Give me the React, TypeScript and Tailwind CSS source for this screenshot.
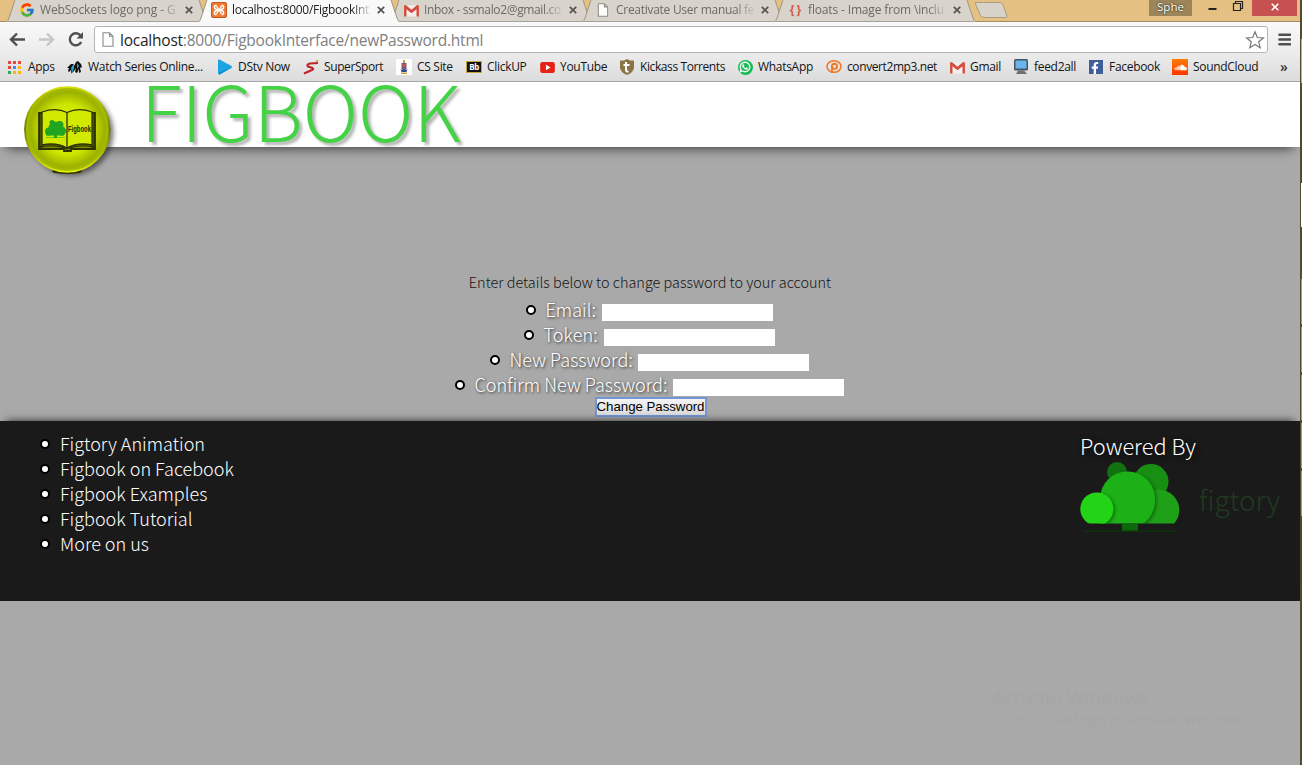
import React from "react";
import { FaWhatsapp, FaSoundcloud, FaFacebookF } from "react-icons/fa";
import { FcGoogle } from "react-icons/fc";

function PageIcon({ cls }: { cls: string }) {
  return (
    <svg viewBox="0 0 12 15" className={cls}>
      <path d="M1 .8h6.5L11 4.3v10H1z M7.5 .8v3.5H11" fill="#fdfdfb" stroke="#8b8b88" strokeWidth="1.1" />
    </svg>
  );
}

function GmailIcon() {
  return (
    <svg viewBox="0 0 16 14" className="h-[13px] w-[15px]">
      <path d="M1 1.5h14v12H1z" fill="#f2efee" />
      <path d="M0 2.2V13.5h2.6V5.6L8 10l5.4-4.4v7.9H16V2.2Q15.4.6 13.8 1.3L8 6.2 2.2 1.3Q.6.6 0 2.2z" fill="#d54b3d" />
    </svg>
  );
}

function XamppIcon() {
  return (
    <svg viewBox="0 0 16 16" className="size-4">
      <rect x=".5" y=".5" width="15" height="15" rx="1.5" fill="#ee7b35" stroke="#c9561a" />
      <g fill="none" stroke="#fff" strokeWidth="1.6">
        <path d="M5.600 3.500H4.500Q3.500 3.500 3.500 4.500V5.500Q3.500 6.500 4.500 7L11.500 9Q12.500 9.500 12.500 10.500V11.500Q12.500 12.500 11.500 12.500H10.400" />
        <path d="M10.400 3.500h1.100Q12.500 3.500 12.500 4.500V5.500Q12.500 6.500 11.500 7L4.500 9Q3.500 9.500 3.500 10.500V11.500Q3.500 12.500 4.500 12.500h1.100" />
        <path d="M5.500 4l5 8M10.500 4l-5 8" strokeWidth="1.200" />
      </g>
    </svg>
  );
}

type TabProps = { icon: React.ReactNode; title: string; active?: boolean; track: string };

function Tab({ icon, title, active, track }: TabProps) {
  return (
    <div className={"relative -mr-[10px] flex h-[22px] w-[202px] shrink-0 items-center pl-[14px] " + (active ? "z-10" : "")}>
      <svg viewBox="0 0 202 22" className="absolute inset-0 h-[22px] w-[202px]">
        <path d="M0 22Q2 21.500 3 18L8 3Q8.500 1 9 0H193Q193.500 1 194 3L199 18Q200 21.500 202 22z" fill={active ? "#f9f9f9" : "#d9d4cb"} />
        <path d="M0 22Q2 21.500 3 18L8 3Q8.500 1 9 0M193 0Q193.500 1 194 3L199 18Q200 21.500 202 22" fill="none" stroke="#a0957f" strokeWidth="1" />
        {!active && <path d="M2 21.500h198" stroke="#a5a09a" />}
      </svg>
      <div className="relative -mt-[2px] -ml-px flex w-4 justify-center">{icon}</div>
      <div className={"relative -mt-[3px] ml-[5px] w-[138px] overflow-hidden text-[12px] leading-4 whitespace-nowrap [mask-image:linear-gradient(to_right,#000_120px,transparent_140px)] " + track + " " + (active ? "text-[#222]" : "text-[#6d6a66]")}>{title}</div>
      <svg viewBox="0 0 8 8" className="relative -mt-[2px] ml-[7px] size-2">
        <path d="M.8 .8l6.400 6.400M7.200 .8L.8 7.200" stroke="#55534f" strokeWidth="1.700" />
      </svg>
    </div>
  );
}

function BrowserChrome() {
  return (
    <div className="relative h-[82px] w-[1300px] shrink-0 font-['Open_Sans',sans-serif] font-normal">
      <div className="flex h-[22px] bg-[#e4c182] pl-[6px] shadow-[inset_0_-1px_0_#a18c63]">
        <Tab icon={<FcGoogle size={16} />} title="WebSockets logo png - G" track="tracking-[-0.1px]" />
        <Tab icon={<XamppIcon />} title="localhost:8000/FigbookInt" active track="tracking-[-0.28px]" />
        <Tab icon={<GmailIcon />} title="Inbox - ssmalo2@gmail.co" track="tracking-[-0.35px]" />
        <Tab icon={<PageIcon cls="h-[14px] w-[12px]" />} title="Creativate User manual fe" track="tracking-[-0.28px]" />
        <Tab icon={<span className="-mt-px ml-[3px] text-[12px] leading-3 font-bold tracking-[2px] text-[#d25b4d]">{"{}"}</span>} title="floats - Image from \inclu" track="tracking-[-0.15px]" />
        <svg viewBox="0 0 34 22" className="ml-[8px] h-[22px] w-[34px]">
          <path d="M1.500 2.500H26Q28 2.500 28.700 4.500L33 16Q33.300 17.500 31.500 17.500H10Q7.500 17.500 6.500 15.500L1.500 4Q1 2.500 1.500 2.500z" fill="#d8d3c9" stroke="#aa9c80" />
        </svg>
        <div className="ml-auto flex h-4 items-center">
          <div className="h-4 w-[43px] bg-[#9c855b] text-center text-[11.500px] leading-[13px] text-white [text-shadow:0_0_2px_#000]">Sphe</div>
          <svg viewBox="0 0 60 16" className="h-4 w-[60px]">
            <path d="M16.500 8h8v2h-8z" fill="#222" />
            <path d="M41.500 3.500h7v7h-7zM43.500 3V1.500h7v7H49" fill="none" stroke="#222" strokeWidth="1.200" />
          </svg>
          <div className="flex h-4 w-[45px] items-center justify-center bg-[#c75050]">
            <svg viewBox="0 0 8 8" className="-mt-[2px] size-2"><path d="M.7 .7l6.600 6.600M7.300 .7L.7 7.300" stroke="#fff" strokeWidth="1.600" /></svg>
          </div>
          <div className="w-[3px]" />
        </div>
      </div>
      <div className="flex h-[31px] items-center bg-linear-to-b from-[#f9f9f9] to-[#ececec]">
        <svg viewBox="0 0 94 31" className="h-[31px] w-[94px] shrink-0" fill="none">
          <path d="M25 17.500H11M17 11.500l-6 6 6 6" stroke="#4f4f4f" strokeWidth="2.400" />
          <path d="M39 17.500h14M47 11.500l6 6-6 6" stroke="#c6c6c6" strokeWidth="2.400" />
          <path d="M80.500 13.500A6 6 0 1 0 81.200 20" stroke="#4f4f4f" strokeWidth="2.400" />
          <path d="M83 10v6.500h-6.500z" fill="#4f4f4f" />
        </svg>
        <div className="mt-[4px] flex h-[27px] w-[1174px] items-center rounded-[3px] border border-[#b5b5b5] bg-white">
          <PageIcon cls="ml-[7px] h-[15px] w-[12px]" />
          <div className="ml-[6px] text-[15.500px] leading-5 tracking-[-0.23px] whitespace-nowrap text-[#808080]"><span className="text-[#1e1e1e]">localhost</span>:8000/FigbookInterface/newPassword.html</div>
          <svg viewBox="0 0 20 20" className="mr-[2px] ml-auto size-5"><path d="M10 1.800l2.300 5.700 6.100.400-4.700 3.900 1.500 6L10 14.500 4.800 17.800l1.500-6L1.600 7.900l6.100-.4z" fill="#fff" stroke="#777" strokeWidth="1.200" /></svg>
        </div>
        <svg viewBox="0 0 13 13" className="mt-[4px] ml-[10px] h-[13px] w-[13px]"><path d="M1.500 1.800h10.500M1.500 6.500h10.500M1.500 11.200h10.500" stroke="#505050" strokeWidth="2.600" strokeLinecap="round" /></svg>
      </div>
      <Bookmarks />
    </div>
  );
}

function Mark({ w, icon, label, gap = "pl-[5px]", track = "tracking-[-0.3px]" }: { w: string; icon: React.ReactNode; label: string; gap?: string; track?: string }) {
  return (
    <div className={"flex shrink-0 items-center " + w}>
      <div className="flex w-4 shrink-0 justify-center">{icon}</div>
      <div className={"text-[12px] leading-4 whitespace-nowrap text-[#141414] " + gap + " " + track}>{label}</div>
    </div>
  );
}

function Bookmarks() {
  return (
    <div className="flex h-[29px] items-center border-b border-[#a8a8a8] bg-linear-to-b from-[#ececec] to-[#dcdcdc] pl-[6px]">
      <Mark w="w-[61px]" label="Apps" icon={
        <svg viewBox="0 0 13 13" className="size-[13px]">
          <path d="M0 0h3v3H0zM5 0h3v3H5zM10 0h3v3h-3zM0 5h3v3H0z" fill="#e8453c" />
          <path d="M5 5h3v3H5z" fill="#4688f1" /><path d="M10 5h3v3h-3zM5 10h3v3H5zM10 10h3v3h-3z" fill="#f8b60b" /><path d="M0 10h3v3H0z" fill="#3aa757" />
        </svg>} gap="pl-[6px]" />
      <Mark w="w-[150px]" label="Watch Series Online..." track="tracking-[-0.3px]" icon={
        <svg viewBox="0 0 16 16" className="size-4">
          <path d="M0 9l4-4 3 0-2 3 1 3-2 4 0-4-2 2-1-1 1-3zM9 3l2-1 3 3 1 3-2 1 1 4-2 1 0-4-2 4-2-1 1-4-2 3-2 2 1-5z" fill="#111" />
          <path d="M4 9l3-4v4l-2 5zM10 4l2 3-2 3z" fill="#28a9cf" />
        </svg>} />
      <Mark w="w-[86px]" label="DStv Now" icon={<svg viewBox="0 0 16 16" className="size-4"><path d="M1 1.500Q1 0 2.500.6L14.500 7q1.200 1 0 2L3 15.600Q1 16 1 14z" fill="#1ba3e3" /><path d="M2 14l12.500-6-12 7.500z" fill="#0b86c9" /></svg>} />
      <Mark w="w-[93px]" label="SuperSport" track="tracking-[-0.4px]" icon={<svg viewBox="0 0 16 16" className="size-4"><path d="M15 4L7 4.500Q3 5.500 5 7.500L9.500 9Q11 10 9 11L1 14.500" fill="none" stroke="#c02227" strokeWidth="2.100" /><circle cx="14" cy="2" r="1.200" fill="#d9a441" /></svg>} />
      <Mark w="w-[70px]" label="CS Site" track="tracking-[-0.3px]" icon={<svg viewBox="0 0 16 16" className="size-4"><path d="M0 0h16v16H0z" fill="#fff" /><path d="M7 1h2v3H7z" fill="#c79a43" /><path d="M5.500 4h5v6L8 12l-2.500-2z" fill="#6a5a7c" /><path d="M6.500 5h3v3h-3z" fill="#cc5a42" /><path d="M4.500 10l1.500 1h4l1.500-1-1 3h-5z" fill="#274a8c" /><path d="M5 13.500h6v1.500H5z" fill="#d09a3d" /></svg>} />
      <Mark w="w-[73px]" label="ClickUP" icon={<div className="h-[12px] w-4 border border-[#c7a53d] bg-[#111] text-center text-[8px] leading-[10px] font-bold tracking-[-0.5px] text-white">Bb</div>} />
      <Mark w="w-[80px]" label="YouTube" icon={<svg viewBox="0 0 16 12" className="h-[11px] w-[15px]"><rect width="16" height="12" rx="2.500" fill="#e62117" /><path d="M6.300 3v6l5-3z" fill="#fff" /></svg>} />
      <Mark w="w-[118px]" label="Kickass Torrents" track="tracking-[-0.4px]" icon={<svg viewBox="0 0 16 16" className="size-4"><path d="M8 0l3 1.500h4V9q-1 5-7 7-6-2-7-7V1.500h4z" fill="#8b7446" /><path d="M7 3v8q0 2 2.500 1.500M4.500 6h6" fill="none" stroke="#fff" strokeWidth="2" /></svg>} />
      <Mark w="w-[89px]" label="WhatsApp" icon={<div className="flex size-[15px] items-center justify-center rounded-full bg-[#13b951] text-white"><FaWhatsapp size={12} strokeWidth={20} stroke="#fff" /></div>} />
      <Mark w="w-[123px]" label="convert2mp3.net" track="tracking-[-0.4px]" icon={<svg viewBox="0 0 16 16" className="size-4" fill="none" stroke="#ee7a27"><ellipse cx="8" cy="7.500" rx="7" ry="5.800" strokeWidth="1.600" /><circle cx="8.500" cy="7.300" r="2.600" strokeWidth="1.900" /><path d="M6 6.500v7.500" strokeWidth="1.900" /></svg>} />
      <Mark w="w-[64px]" label="Gmail" icon={<GmailIcon />} />
      <Mark w="w-[75px]" label="feed2all" icon={<svg viewBox="0 0 16 16" className="size-4"><rect x="1" y="0" width="14" height="11.500" rx="1.500" fill="#45545f" /><path d="M2.500 1.500h11v8h-11z" fill="#68b4ec" /><path d="M5 11.500h6l3 3.500H3z" fill="#687177" /></svg>} />
      <Mark w="w-[84px]" label="Facebook" icon={<div className="flex size-[14px] items-end justify-end bg-[#415e9b] pr-[2px] text-white"><FaFacebookF size={12} /></div>} />
      <Mark w="w-[106px]" label="SoundCloud" icon={<div className="flex size-4 items-center justify-center bg-linear-to-b from-[#ff7a00] to-[#ff2f00] text-white"><FaSoundcloud size={13} /></div>} />
      <div className="pl-[2px] text-[14px] leading-4 font-semibold text-[#333]">»</div>
    </div>
  );
}

function FigbookLogo() {
  return (
    <svg viewBox="0 0 100 100" className="absolute top-0 left-[18px] size-[100px]">
      <defs>
        <radialGradient id="disc"><stop offset="0" stopColor="#eaff00" /><stop offset=".6" stopColor="#cde500" /><stop offset=".88" stopColor="#9db200" /><stop offset="1" stopColor="#a9bf00" /></radialGradient>
        <linearGradient id="rim" x2="0" y2="1"><stop stopColor="#d6e000" /><stop offset=".5" stopColor="#6d7c00" /><stop offset="1" stopColor="#e2f000" /></linearGradient>
        <linearGradient id="cover"><stop stopColor="#2c3200" /><stop offset=".08" stopColor="#7f9000" /><stop offset=".92" stopColor="#7f9000" /><stop offset="1" stopColor="#2c3200" /></linearGradient>
        <filter id="soft" x="-20%" y="-20%" width="150%" height="150%"><feGaussianBlur stdDeviation="2.500" /></filter>
      </defs>
      <circle cx="53" cy="51" r="42.500" fill="#222" opacity=".6" filter="url(#soft)" />
      <ellipse cx="49" cy="89.500" rx="15" ry="2.500" fill="#333300" />
      <circle cx="49.300" cy="47.500" r="42.300" fill="url(#disc)" stroke="url(#rim)" strokeWidth="1.800" />
      <g stroke="#2c3200" fill="none">
        <path d="M24 31h-3v36h25v2h7v-2h24V31h-3" strokeWidth="1.800" fill="url(#cover)" />
        <path d="M24 30Q38 25 49 30.500Q60 25 74 30V63Q60 60 49 66Q38 60 24 63z" fill="#d2ea00" strokeWidth="1.300" />
        <path d="M49 30V66M22 65Q38 62 49 67Q60 62 76 65" strokeWidth="1.300" />
      </g>
      <g fill="#20a520"><circle cx="31" cy="49.500" r="4" /><circle cx="37" cy="46" r="6.500" /><circle cx="43.500" cy="49" r="4.500" /><circle cx="34" cy="40.500" r="2.500" /><circle cx="41.500" cy="43" r="4" /><path d="M28 50h18v3.500H28zM36 53h3v3h-3z" /><path d="M28 55h19v1H28z" opacity=".5" /></g>
      <text x="50" y="50" textLength="23" lengthAdjust="spacingAndGlyphs" fontFamily="Liberation Sans" fontWeight="700" fontSize="8.500" fill="#222900">Figbook</text>
    </svg>
  );
}

function Field({ label, w }: { label: string; w: string }) {
  return (
    <li className="mr-[2px] flex h-[25px] items-center">
      <span className="-mt-[2px] mr-px size-[10px] rounded-full border-[2.400px] border-black bg-white" />
      <label className={"-mt-[2px] ml-[9px] text-[18.100px] leading-[25px] font-light whitespace-nowrap text-white [text-shadow:1px_1px_3px_#222] " + w}>{label}</label>
      <input className="mt-[4px] h-[17px] w-[171px] bg-white outline-none" />
    </li>
  );
}

function FigtoryLogo() {
  return (
    <svg viewBox="0 0 202 75" className="h-[75px] w-[202px]">
      <defs>
        <filter id="leaf" x="-20%" y="-20%" width="140%" height="140%"><feDropShadow dx="2" dy="1" stdDeviation="1.500" floodColor="#063a06" floodOpacity=".5" /></filter>
        <clipPath id="ground"><path d="M0 0h110v61.500H0z" /></clipPath>
      </defs>
      <circle cx="37" cy="10" r="10" fill="#12720f" />
      <circle cx="71" cy="19.500" r="17.500" fill="#178f13" />
      <g clipPath="url(#ground)">
        <circle cx="79" cy="48" r="20.300" fill="#1ea019" />
        <path d="M20 62V37a27.500 27.500 0 0 1 55 0q0 16-12 25z" fill="#1eb117" filter="url(#leaf)" />
        <circle cx="16.800" cy="47" r="16.500" fill="#20d318" filter="url(#leaf)" />
      </g>
      <path d="M42 61.500h16v8H42z" fill="#0c680b" /><path d="M3 68.500h93v1.500H3z" fill="#0d320c" />
      <text x="119" y="49" textLength="81" lengthAdjust="spacingAndGlyphs" fontFamily="Noto Sans CJK SC" fontWeight="300" fontSize="28" fill="#203b20">figtory</text>
    </svg>
  );
}

const links = ["Figtory Animation", "Figbook on Facebook", "Figbook Examples", "Figbook Tutorial", "More on us"];

export default function App() {
  return (
    <div className="flex h-[765px] w-[1302px] overflow-hidden bg-[#554932]">
      <div className="flex w-[1300px] shrink-0 flex-col bg-[#a9a9a9] font-['Noto_Sans_CJK_SC',sans-serif] font-light">
        <BrowserChrome />
        <header className="relative z-10 h-[65px] shrink-0 bg-white pl-[141px] shadow-[0_8px_11px_-7px_rgba(0,0,0,0.7)]">
          <FigbookLogo />
          <h1 className="-mt-[6px] h-[66px] text-[76.300px] leading-[66px] font-light whitespace-nowrap text-[#46d246] [text-shadow:3px_3px_3px_rgba(0,0,0,0.3)]">FIGBOOK</h1>
        </header>
        <main className="flex h-[274px] shrink-0 flex-col items-center pt-[123px]">
          <p className="text-[14.450px] leading-[24px] whitespace-nowrap text-[#151515]">Enter details below to change password to your account</p>
          <ul className="mt-[4px] flex flex-col items-center">
            <Field label="Email:" w="w-[56px]" />
            <Field label="Token:" w="w-[60px]" />
            <Field label="New Password:" w="w-[128px]" />
            <Field label="Confirm New Password:" w="w-[198px]" />
          </ul>
          <button className="-mt-px ml-px h-[20px] w-[112px] border-2 border-[#7397d5] bg-linear-to-b from-[#f4f4f4] to-[#dddddd] font-['Liberation_Sans',sans-serif] text-[13.300px] leading-4 font-normal tracking-[-0.05px] whitespace-nowrap text-black">Change Password</button>
        </main>
        <footer className="flex h-[180px] shrink-0 justify-between bg-[#1a1a1a] shadow-[0_-6px_8px_-6px_rgba(0,0,0,0.75)]">
          <ul className="pt-[11px] pl-[40px]">
            {links.map((text) => (
              <li key={text} className="flex h-[25px] items-center text-[18.050px] leading-[25px] whitespace-nowrap text-white">
                <span className="-mt-[2px] size-[10px] rounded-full border-2 border-black bg-white" />
                <a className="-mt-[2px] ml-[10px]">{text}</a>
              </li>
            ))}
          </ul>
          <div className="w-[220px] pt-[10px]">
            <div className="h-[31px] text-[21.800px] leading-[30px] whitespace-nowrap text-white [text-shadow:2px_2px_6px_#000]">Powered By</div>
            <FigtoryLogo />
          </div>
        </footer>
        <div className="pt-[83px] pl-[992px] font-['Open_Sans',sans-serif] font-normal text-[#a6a6a6]">
          <div className="text-[19px] leading-[26px]">Activate Windows</div>
          <div className="text-[14px] leading-[20px] tracking-[0.2px] whitespace-nowrap">Go to PC settings to activate Windows.</div>
        </div>
      </div>
      <div className="flex w-[2px] flex-col pl-px">
        <div className="h-[39px] shrink-0" />
        <div className="h-[44px] shrink-0 bg-[#b9b09f]" />
        <div className="h-[100px] shrink-0" />
        <div className="h-[44px] shrink-0 bg-white" />
        <div className="h-[52px] shrink-0" />
        <div className="flex h-[237px] shrink-0 flex-col gap-[3px]">
          <div className="flex-1 bg-[#a59a86]" />
          <div className="flex-1 bg-[#a59a86]" />
          <div className="flex-1 bg-[#a59a86]" />
          <div className="flex-1 bg-[#a59a86]" />
          <div className="flex-1 bg-[#a59a86]" />
        </div>
      </div>
    </div>
  );
}
